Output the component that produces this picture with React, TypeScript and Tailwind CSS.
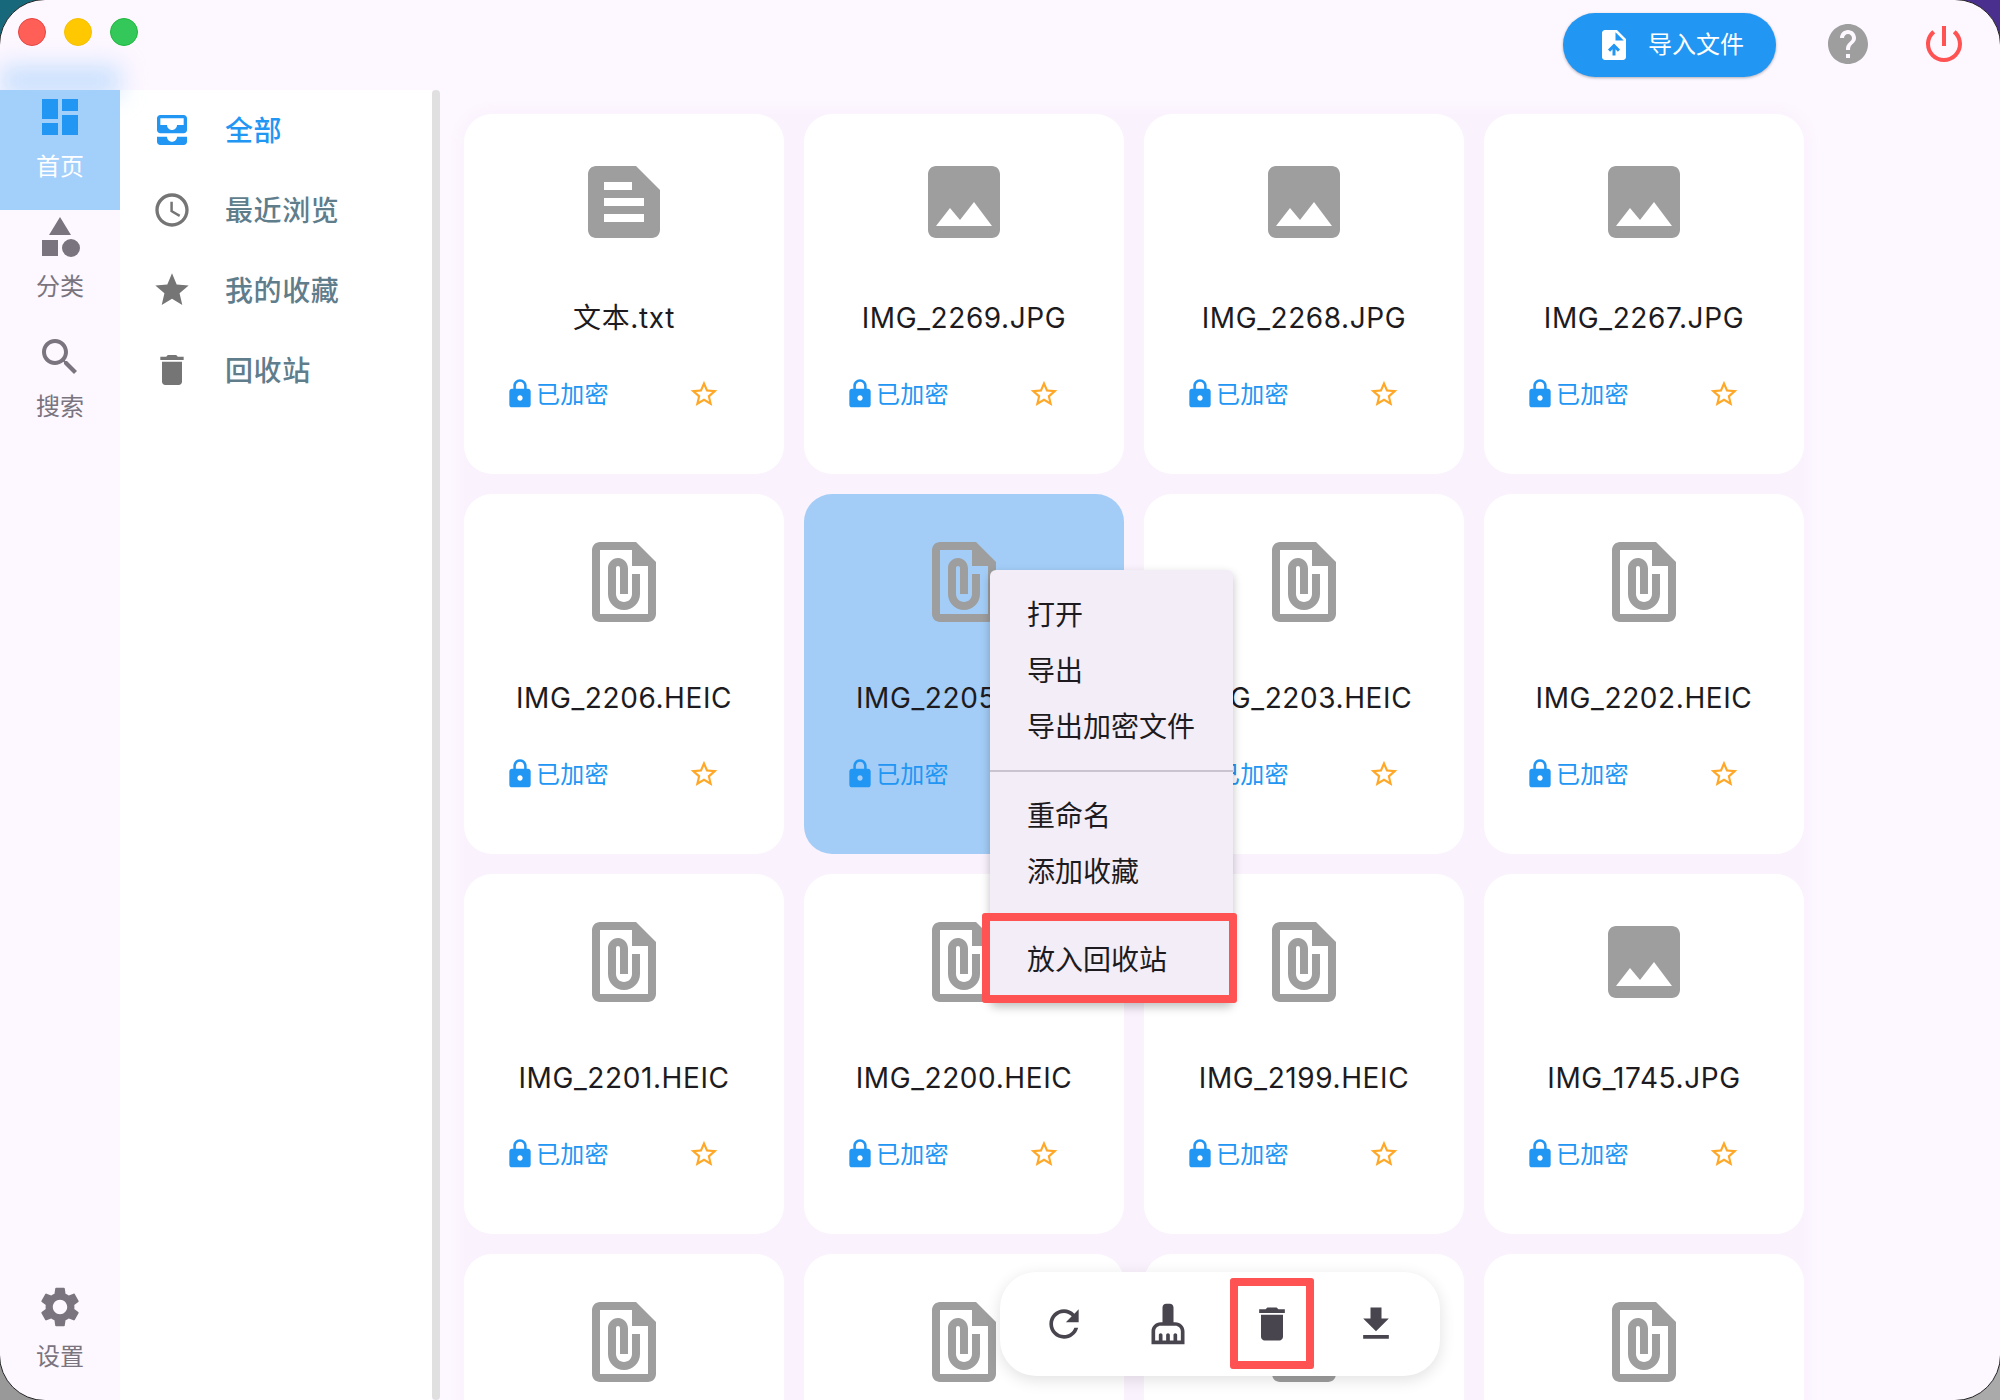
import type { ReactNode } from "react";

const P = {
  image: "M21 19V5c0-1.1-.9-2-2-2H5c-1.1 0-2 .9-2 2v14c0 1.1.9 2 2 2h14c1.1 0 2-.9 2-2zM8.5 13.5l2.5 3.01L14.5 12l4.5 6H5l3.5-4.5z",
  text: "M15 3H5c-1.1 0-2 .9-2 2v14c0 1.1.9 2 2 2h14c1.1 0 2-.9 2-2V9l-6-6zM7 7h7v2H7V7zm10 10H7v-2h10v2zm0-4H7v-2h10v2z",
  attach: "M15 2H6c-1.1 0-2 .9-2 2v16c0 1.1.9 2 2 2h12c1.1 0 2-.9 2-2V7l-5-5zM6 20V4h8v4h4v12H6zm10-10v5c0 2.21-1.79 4-4 4s-4-1.79-4-4V8.5c0-1.47 1.26-2.64 2.76-2.49 1.3.13 2.24 1.32 2.24 2.63V15h-2V8.5c0-.28-.22-.5-.5-.5s-.5.22-.5.5V15c0 1.1.9 2 2 2s2-.9 2-2v-5h2z",
  lock: "M18 8h-1V6c0-2.76-2.24-5-5-5S7 3.24 7 6v2H6c-1.1 0-2 .9-2 2v10c0 1.1.9 2 2 2h12c1.1 0 2-.9 2-2V10c0-1.1-.9-2-2-2zm-6 9c-1.1 0-2-.9-2-2s.9-2 2-2 2 .9 2 2-.9 2-2 2zm3.1-9H8.9V6c0-1.71 1.39-3.1 3.1-3.1 1.71 0 3.1 1.39 3.1 3.1v2z",
  starBorder: "M22 9.24l-7.19-.62L12 2 9.19 8.63 2 9.24l5.46 4.73L5.82 21 12 17.27 18.18 21l-1.63-7.03L22 9.24zM12 15.4l-3.76 2.27 1-4.28-3.32-2.88 4.38-.38L12 6.1l1.71 4.04 4.38.38-3.32 2.88 1 4.28L12 15.4z",
  star: "M12 17.27L18.18 21l-1.64-7.03L22 9.24l-7.19-.61L12 2 9.19 8.63 2 9.24l5.46 4.73L5.82 21z",
  dashboard: "M3 13h8V3H3v10zm0 8h8v-6H3v6zm10 0h8V11h-8v10zm0-18v6h8V3h-8z",
  category: "M12 2l-5.5 9h11L12 2zM17.5 13a4.5 4.5 0 1 0 0 9 4.5 4.5 0 0 0 0-9zM3 13.5h8v8H3z",
  search: "M15.5 14h-.79l-.28-.27C15.41 12.59 16 11.11 16 9.5 16 5.91 13.09 3 9.5 3S3 5.91 3 9.5 5.91 16 9.5 16c1.61 0 3.09-.59 4.23-1.57l.27.28v.79l5 4.99L20.49 19l-4.99-5zm-6 0C7.01 14 5 11.99 5 9.5S7.01 5 9.5 5 14 7.01 14 9.5 11.99 14 9.5 14z",
  settings: "M19.14 12.94c.04-.3.06-.61.06-.94 0-.32-.02-.64-.07-.94l2.03-1.58c.18-.14.23-.41.12-.61l-1.92-3.32c-.12-.22-.37-.29-.59-.22l-2.39.96c-.5-.38-1.03-.7-1.62-.94l-.36-2.54c-.04-.24-.24-.41-.48-.41h-3.84c-.24 0-.43.17-.47.41l-.36 2.54c-.59.24-1.13.57-1.62.94l-2.39-.96c-.22-.08-.47 0-.59.22L2.74 8.87c-.12.21-.08.47.12.61l2.03 1.58c-.05.3-.09.63-.09.94s.02.64.07.94l-2.03 1.58c-.18.14-.23.41-.12.61l1.92 3.32c.12.22.37.29.59.22l2.39-.96c.5.38 1.03.7 1.62.94l.36 2.54c.05.24.24.41.48.41h3.84c.24 0 .44-.17.47-.41l.36-2.54c.59-.24 1.13-.56 1.62-.94l2.39.96c.22.08.47 0 .59-.22l1.92-3.32c.12-.22.07-.47-.12-.61l-2.01-1.58zM12 15.6c-1.98 0-3.6-1.62-3.6-3.6s1.62-3.6 3.6-3.6 3.6 1.62 3.6 3.6-1.62 3.6-3.6 3.6z",
  inbox: "M19 3H5c-1.1 0-2 .9-2 2v7c0 1.1.9 2 2 2h14c1.1 0 2-.9 2-2V5c0-1.1-.9-2-2-2zm0 6h-4c0 1.62-1.38 3-3 3s-3-1.38-3-3H5V5h14v4zm-4 7h6v3c0 1.1-.9 2-2 2H5c-1.1 0-2-.9-2-2v-3h6c0 1.66 1.34 3 3 3s3-1.34 3-3z",
  clock: "M11.99 2C6.47 2 2 6.48 2 12s4.47 10 9.99 10C17.52 22 22 17.52 22 12S17.52 2 11.99 2zM12 20c-4.42 0-8-3.58-8-8s3.58-8 8-8 8 3.58 8 8-3.58 8-8 8zm.5-13H11v6l5.25 3.15.75-1.23-4.5-2.67z",
  trash: "M6 19c0 1.1.9 2 2 2h8c1.1 0 2-.9 2-2V7H6v12zM19 4h-3.5l-1-1h-5l-1 1H5v2h14V4z",
  refresh: "M17.65 6.35C16.2 4.9 14.21 4 12 4c-4.42 0-7.99 3.58-7.99 8s3.57 8 7.99 8c3.73 0 6.84-2.55 7.73-6h-2.08c-.82 2.33-3.04 4-5.65 4-3.31 0-6-2.69-6-6s2.69-6 6-6c1.66 0 3.14.69 4.22 1.78L13 11h7V4l-2.35 2.35z",
  broom: "M16 11h-1V3c0-1.1-.9-2-2-2h-2c-1.1 0-2 .9-2 2v8H8c-2.76 0-5 2.24-5 5v7h18v-7c0-2.76-2.24-5-5-5zm3 10h-2v-3c0-.55-.45-1-1-1s-1 .45-1 1v3h-2v-3c0-.55-.45-1-1-1s-1 .45-1 1v3H9v-3c0-.55-.45-1-1-1s-1 .45-1 1v3H5v-5c0-1.65 1.35-3 3-3h8c1.65 0 3 1.35 3 3v5z",
  download: "M19 9h-4V3H9v6H5l7 7 7-7zM5 18v2h14v-2H5z",
  upload: "M14 2H6c-1.1 0-1.99.9-1.99 2L4 20c0 1.1.89 2 1.99 2H18c1.1 0 2-.9 2-2V8l-6-6zm-1 7V3.5L18.5 9H13zm-5 6.01l1.41 1.41L11 14.84V19h2v-4.16l1.59 1.59L16 15.01 12.01 11 8 15.01z",
  help: "M12 2C6.48 2 2 6.48 2 12s4.48 10 10 10 10-4.48 10-10S17.52 2 12 2zm1 17h-2v-2h2v2zm2.07-7.75l-.9.92C13.45 12.9 13 13.5 13 15h-2v-.5c0-1.1.45-2.1 1.17-2.83l1.24-1.26c.37-.36.59-.86.59-1.41 0-1.1-.9-2-2-2s-2 .9-2 2H8c0-2.21 1.79-4 4-4s4 1.79 4 4c0 .88-.36 1.68-.93 2.25z",
  power: "M13 3h-2v10h2V3zm4.83 2.17l-1.42 1.42C17.99 7.86 19 9.81 19 12c0 3.87-3.13 7-7 7s-7-3.13-7-7c0-2.19 1.01-4.14 2.58-5.42L6.17 5.17C4.23 6.82 3 9.26 3 12c0 4.97 4.03 9 9 9s9-4.03 9-9c0-2.74-1.23-5.18-3.17-6.83z",
};

function Icon({ d, className }: { d: string; className: string }) {
  return (
    <svg viewBox="0 0 24 24" fill="currentColor" fillRule="evenodd" className={`shrink-0 ${className}`}>
      <path d={d} />
    </svg>
  );
}

function RailItem({ d, label, active, className = "" }: { d: string; label: string; active?: boolean; className?: string }) {
  return (
    <div className={`flex h-[120px] flex-col items-center pt-[3px] ${active ? "bg-[#a3d0fb] text-white" : "text-[#79747e]"} ${className}`}>
      <Icon d={d} className={`size-12 ${active ? "text-[#2196f3]" : ""}`} />
      <span className="mt-[10px] text-[24px] leading-[32px]">{label}</span>
    </div>
  );
}

function NavItem({ d, label, active }: { d: string; label: string; active?: boolean }) {
  return (
    <div className="flex h-[80px] items-center gap-[33px] pl-[32px]">
      <Icon d={d} className={`size-10 ${active ? "text-[#2196f3]" : "text-[#757575]"}`} />
      <span className={`pt-[2px] text-[28px] font-medium tracking-[0.6px] ${active ? "text-[#2196f3]" : "text-[#607d8b]"}`}>{label}</span>
    </div>
  );
}

type Kind = "image" | "text" | "attach";

function FileCard({ name, kind, selected }: { name: string; kind: Kind; selected?: boolean }) {
  return (
    <div className={`flex h-[360px] flex-col items-center rounded-[28px] pt-[39.5px] ${selected ? "bg-[#a3cdf7]" : "bg-white"}`}>
      <Icon d={P[kind]} className="size-24 text-[#9e9e9e]" />
      <div className="mt-[50px] h-[36px] text-[28px] leading-[36px] tracking-[0.6px] whitespace-nowrap text-[#1d1b20]">{name}</div>
      <div className="mt-[42px] flex w-full items-center justify-between pr-[64px] pl-[40px]">
        <div className="flex items-center text-[#2196f3]">
          <Icon d={P.lock} className="size-8" />
          <span className="pt-[1px] text-[24px] leading-[32px] tracking-[0.3px]">已加密</span>
        </div>
        <Icon d={P.starBorder} className="size-8 text-[#ffa726]" />
      </div>
    </div>
  );
}

function MenuItem({ children }: { children: ReactNode }) {
  return <div className="flex h-[56px] items-center pl-[37px] text-[28px] text-[#1d1b20]">{children}</div>;
}

function ToolButton({ d, flagged }: { d: string; flagged?: boolean }) {
  return (
    <div className="relative flex w-[104px] justify-center text-[#49454f]">
      <Icon d={d} className="size-11" />
      {flagged && <div className="absolute -top-[24px] left-[10px] h-[91px] w-[84px] rounded-[3px] border-[8px] border-[#ff5252]" />}
    </div>
  );
}

const files: { name: string; kind: Kind; selected?: boolean }[] = [
  { name: "文本.txt", kind: "text" },
  { name: "IMG_2269.JPG", kind: "image" },
  { name: "IMG_2268.JPG", kind: "image" },
  { name: "IMG_2267.JPG", kind: "image" },
  { name: "IMG_2206.HEIC", kind: "attach" },
  { name: "IMG_2205.HEIC", kind: "attach", selected: true },
  { name: "IMG_2203.HEIC", kind: "attach" },
  { name: "IMG_2202.HEIC", kind: "attach" },
  { name: "IMG_2201.HEIC", kind: "attach" },
  { name: "IMG_2200.HEIC", kind: "attach" },
  { name: "IMG_2199.HEIC", kind: "attach" },
  { name: "IMG_1745.JPG", kind: "image" },
  { name: "", kind: "attach" },
  { name: "", kind: "attach" },
  { name: "", kind: "attach" },
  { name: "", kind: "attach" },
];

export default function App() {
  return (
    <div className="relative h-[1400px] w-[2000px] overflow-hidden bg-[conic-gradient(#4a2f8f_0_25%,#aaa_25%_50%,#999_50%_75%,#17687a_75%)] font-['Inter','Noto_Sans_CJK_SC',sans-serif]">
      <div className="-m-px flex h-[1402px] w-[2002px] flex-col overflow-hidden rounded-[46px] border border-[#222] bg-[#fdf7ff]">
        <header className="flex h-[90px] shrink-0 items-start">
          <div className="mt-[18px] ml-[18px] flex gap-[18px]">
            <span className="size-[28px] rounded-full border border-[#e5443f] bg-[#ff5f57]" />
            <span className="size-[28px] rounded-full border border-[#f5c000] bg-[#ffc800]" />
            <span className="size-[28px] rounded-full border border-[#1eb83c] bg-[#34c85a]" />
          </div>
          <div className="ml-auto flex items-start">
            <div className="mt-[13px] flex h-[64px] w-[213px] items-center rounded-full bg-[#2196f3] pl-[33px] text-white shadow-[0_1px_3px_rgba(0,0,0,0.3)]">
              <Icon d={P.upload} className="size-9" />
              <span className="ml-[16px] text-[24px]">导入文件</span>
            </div>
            <Icon d={P.help} className="mt-[20px] ml-[48px] size-12 text-[#9e9e9e]" />
            <Icon d={P.power} className="mt-[20px] ml-[48px] mr-[32px] size-12 text-[#ff5252]" />
          </div>
        </header>

        <div className="flex min-h-0 flex-1">
          <aside className="relative flex w-[120px] shrink-0 flex-col">
            <div className="absolute inset-x-0 -top-[24px] h-[30px] bg-[#a3d0fb]/60 blur-[12px]" />
            <RailItem d={P.dashboard} label="首页" active className="relative" />
            <RailItem d={P.category} label="分类" />
            <RailItem d={P.search} label="搜索" />
            <RailItem d={P.settings} label="设置" className="mt-auto" />
          </aside>

          <nav className="w-[312px] shrink-0 bg-white">
            <NavItem d={P.inbox} label="全部" active />
            <NavItem d={P.clock} label="最近浏览" />
            <NavItem d={P.star} label="我的收藏" />
            <NavItem d={P.trash} label="回收站" />
          </nav>
          <div className="w-[8px] shrink-0 rounded-[4px] bg-[#e0e0e0]" />

          <main className="min-w-0 flex-1 overflow-hidden pt-[24px] pl-[24px]">
            <div className="grid w-[1340px] grid-cols-[repeat(4,320px)] gap-[20px] rounded-[28px] bg-[#faf2fd] shadow-[0_0_10px_8px_#fbf4fe]">
              {files.map((f, i) => (
                <FileCard key={i} {...f} />
              ))}
            </div>
          </main>
        </div>
      </div>

      {/* context menu */}
      <div className="absolute top-[570px] left-[990px] h-[433px] w-[243px] rounded-[6px] bg-[#f3edf7] pt-[17px] shadow-[0_4px_10px_rgba(0,0,0,0.25)]">
        <MenuItem>打开</MenuItem>
        <MenuItem>导出</MenuItem>
        <MenuItem>导出加密文件</MenuItem>
        <div className="mt-[15px] mb-[16px] h-[2px] bg-[#cac4d0]" />
        <MenuItem>重命名</MenuItem>
        <MenuItem>添加收藏</MenuItem>
        <div className="mt-[32px]">
          <MenuItem>放入回收站</MenuItem>
        </div>
        <div className="absolute top-[343px] -left-[8px] h-[90px] w-[255px] rounded-[3px] border-[8px] border-[#ff5252]" />
      </div>

      {/* bottom toolbar */}
      <div className="absolute top-[1272px] left-[1000px] flex h-[104px] w-[440px] items-center justify-center rounded-[36px] bg-white shadow-[0_4px_16px_rgba(0,0,0,0.12)]">
        <ToolButton d={P.refresh} />
        <ToolButton d={P.broom} />
        <ToolButton d={P.trash} flagged />
        <ToolButton d={P.download} />
      </div>
    </div>
  );
}
